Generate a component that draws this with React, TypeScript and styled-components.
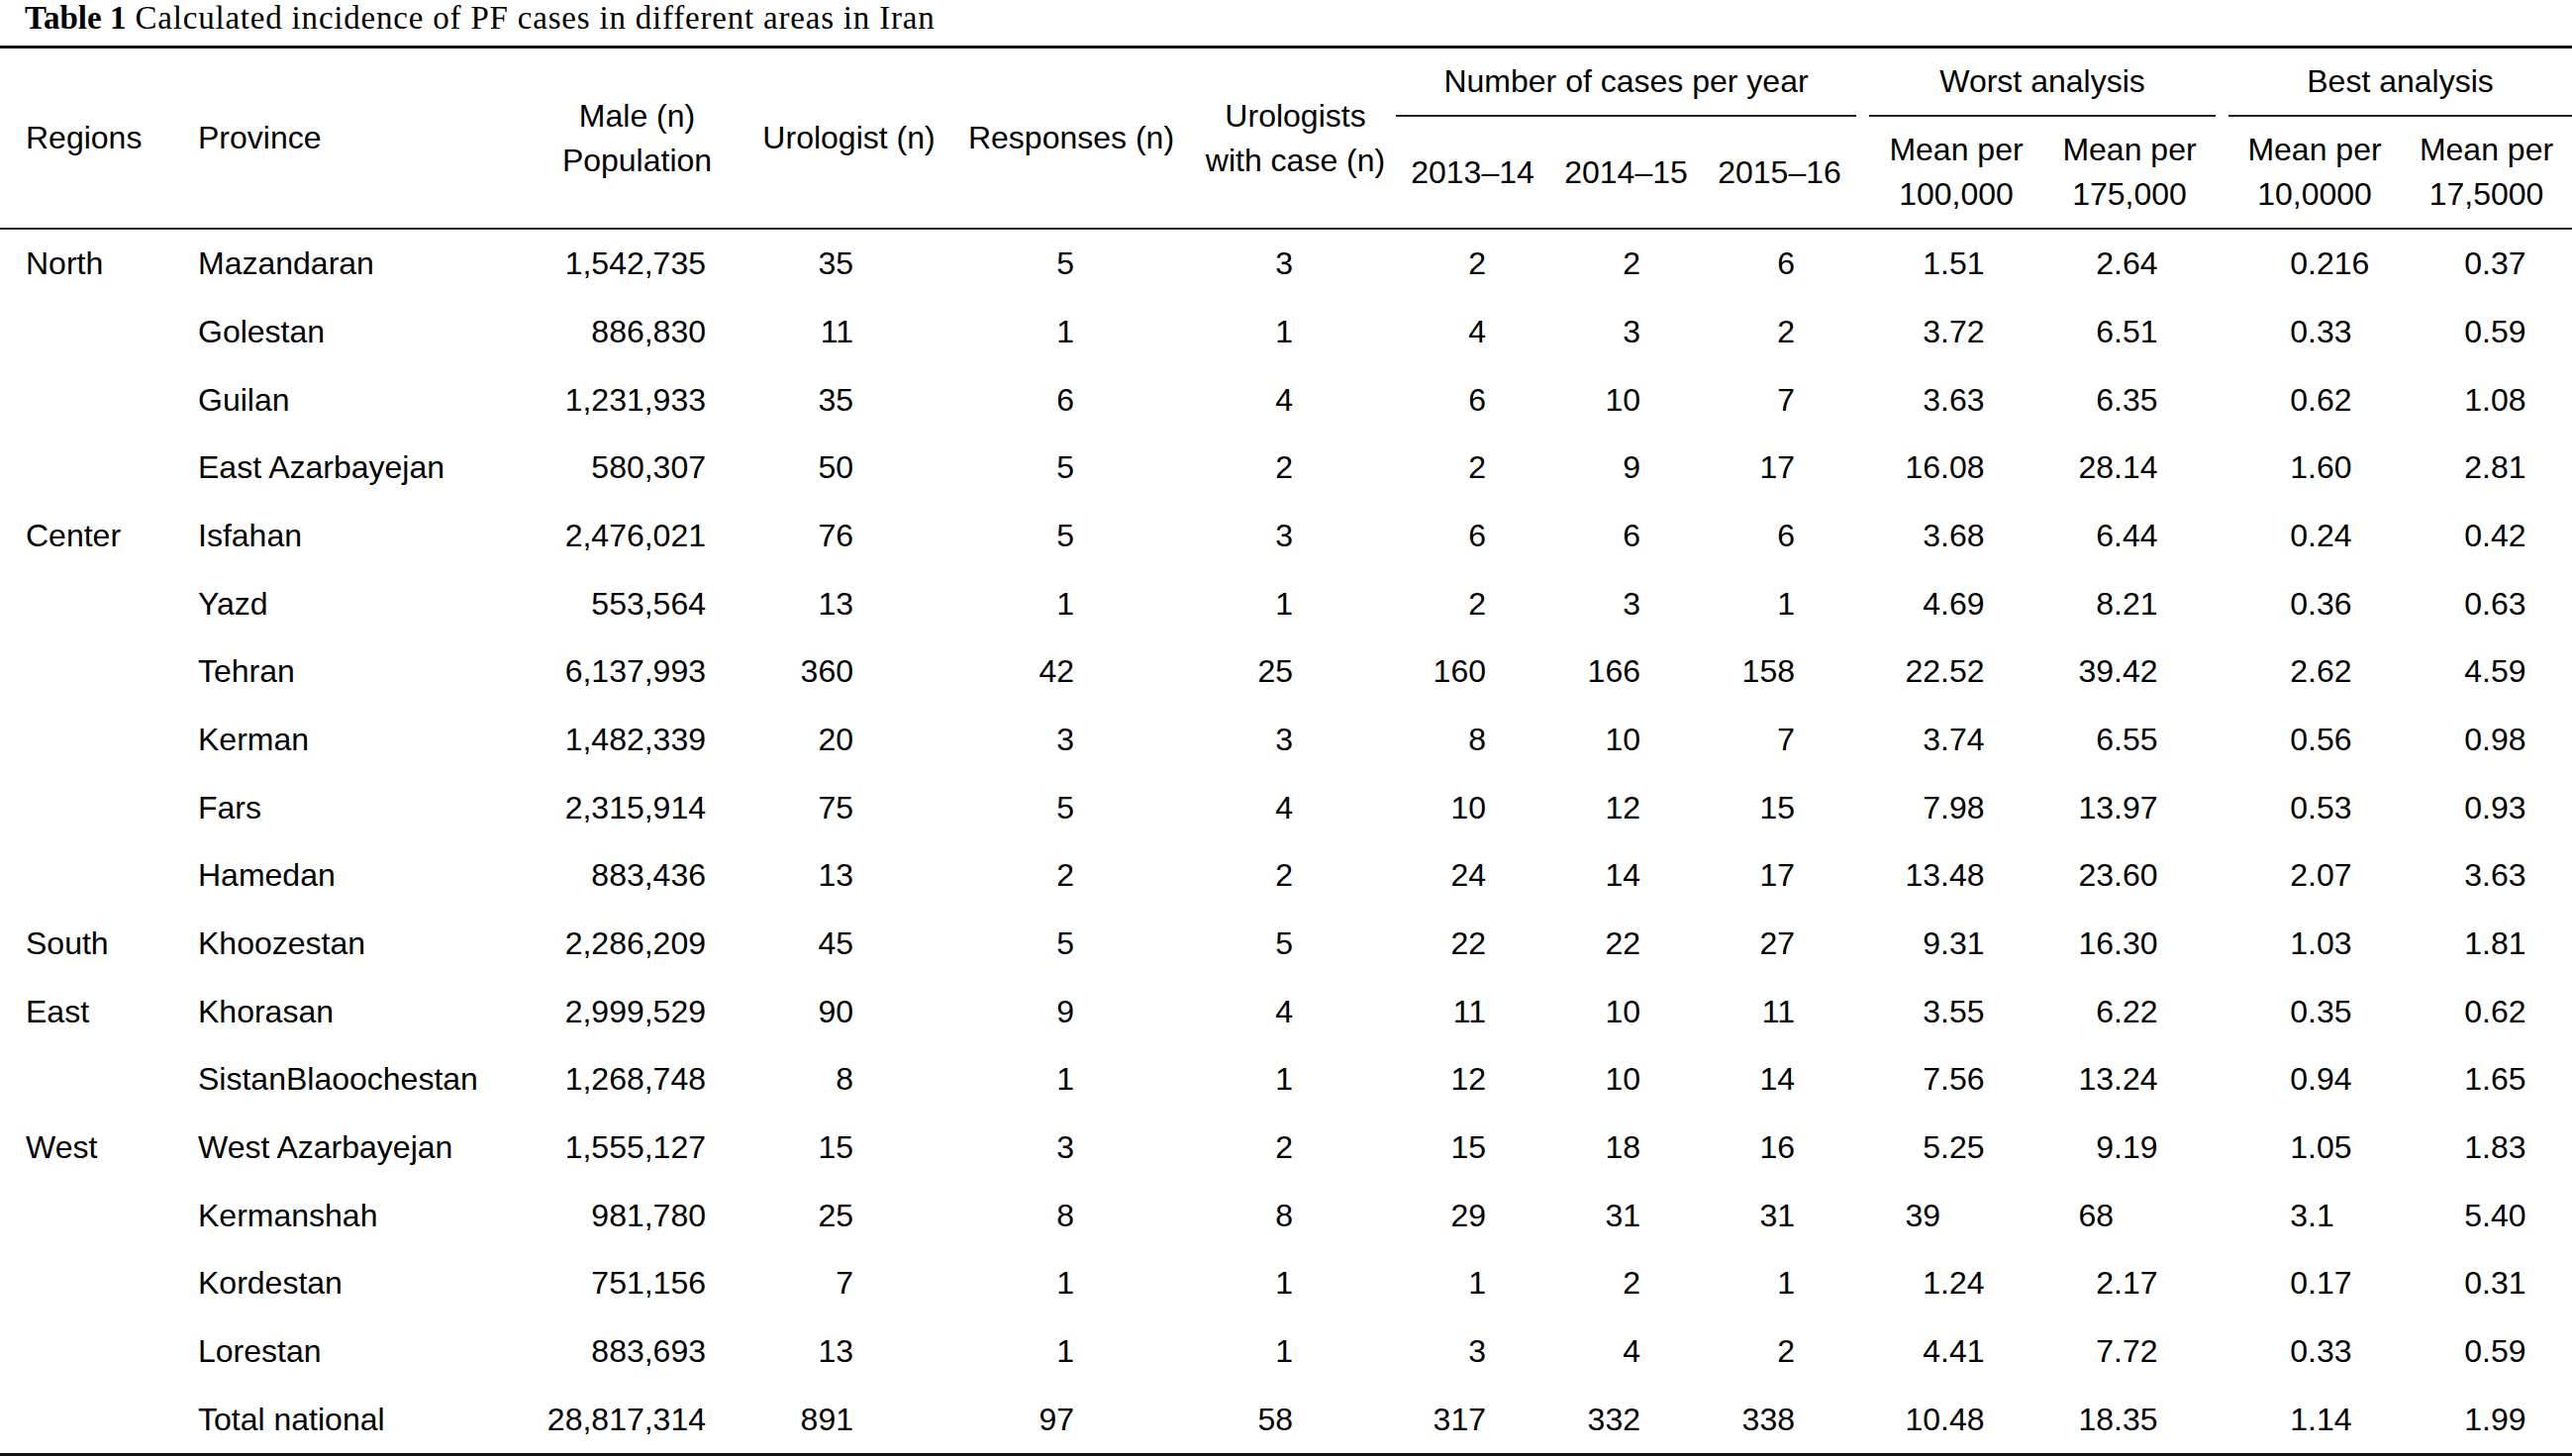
import React from "react";
import styled, { createGlobalStyle } from "styled-components";

const GlobalStyle = createGlobalStyle`
  html, body { margin: 0; padding: 0; background: #ffffff; }
  * { box-sizing: border-box; }
`;

const Page = styled.div`
  width: 2598px;
  background: #ffffff;
  color: #000000;
`;

const Caption = styled.div`
  height: 46px;
  padding-left: 25px;
  font-family: "Liberation Serif", "Times New Roman", serif;
  font-size: 33px;
  letter-spacing: 0.8px;
  line-height: 37px;
  color: #000;
  white-space: nowrap;
`;

const CaptionLabel = styled.b`
  font-weight: 700;
  letter-spacing: 0;
`;

const Table = styled.table`
  width: 2598px;
  table-layout: fixed;
  border-collapse: separate;
  border-spacing: 0;
  font-family: "Liberation Sans", Arial, Helvetica, sans-serif;
  font-size: 32px;
  color: #000;
`;

const HeadRow = styled.tr<{ $h: number }>`
  height: ${(p) => p.$h}px;
`;

const HeadCell = styled.th<{ $align?: "left" | "center"; $pl?: number; $top?: boolean; $bottom?: boolean; $pt?: number }>`
  font-weight: 400;
  padding: ${(p) => p.$pt ?? 0}px 0 0 ${(p) => p.$pl ?? 0}px;
  text-align: ${(p) => p.$align ?? "center"};
  vertical-align: middle;
  line-height: 45px;
  white-space: nowrap;
  border-top: ${(p) => (p.$top ? "3px solid #111" : "none")};
  border-bottom: ${(p) => (p.$bottom ? "2px solid #222" : "none")};
`;

const BodyRow = styled.tr<{ $last?: boolean }>`
  height: ${(p) => (p.$last ? 71.7 : 68.67)}px;
`;

const Cell = styled.td<{ $last?: boolean }>`
  padding: 0;
  vertical-align: middle;
  white-space: nowrap;
  line-height: 36px;
  border-bottom: ${(p) => (p.$last ? "3px solid #111" : "none")};
`;

const TextCell = styled(Cell)<{ $pl: number }>`
  text-align: left;
  padding-left: ${(p) => p.$pl}px;
`;

const NumCell = styled(Cell)<{ $pr: number }>`
  text-align: right;
  padding-right: ${(p) => p.$pr}px;
`;

const DecWrap = styled.div`
  display: flex;
  align-items: baseline;
`;

const IntPart = styled.span<{ $w: number }>`
  display: inline-block;
  width: ${(p) => p.$w}px;
  text-align: right;
`;

const FracPart = styled.span`
  text-align: left;
`;

const cols = [177, 352, 229, 199, 250, 203, 155, 155, 155, 13, 176, 174, 13, 174, 173];

type Row = [string, string, string, string, string, string, string, string, string, string, string, string, string];

const rows: Row[] = [
  ["North", "Mazandaran", "1,542,735", "35", "5", "3", "2", "2", "6", "1.51", "2.64", "0.216", "0.37"],
  ["", "Golestan", "886,830", "11", "1", "1", "4", "3", "2", "3.72", "6.51", "0.33", "0.59"],
  ["", "Guilan", "1,231,933", "35", "6", "4", "6", "10", "7", "3.63", "6.35", "0.62", "1.08"],
  ["", "East Azarbayejan", "580,307", "50", "5", "2", "2", "9", "17", "16.08", "28.14", "1.60", "2.81"],
  ["Center", "Isfahan", "2,476,021", "76", "5", "3", "6", "6", "6", "3.68", "6.44", "0.24", "0.42"],
  ["", "Yazd", "553,564", "13", "1", "1", "2", "3", "1", "4.69", "8.21", "0.36", "0.63"],
  ["", "Tehran", "6,137,993", "360", "42", "25", "160", "166", "158", "22.52", "39.42", "2.62", "4.59"],
  ["", "Kerman", "1,482,339", "20", "3", "3", "8", "10", "7", "3.74", "6.55", "0.56", "0.98"],
  ["", "Fars", "2,315,914", "75", "5", "4", "10", "12", "15", "7.98", "13.97", "0.53", "0.93"],
  ["", "Hamedan", "883,436", "13", "2", "2", "24", "14", "17", "13.48", "23.60", "2.07", "3.63"],
  ["South", "Khoozestan", "2,286,209", "45", "5", "5", "22", "22", "27", "9.31", "16.30", "1.03", "1.81"],
  ["East", "Khorasan", "2,999,529", "90", "9", "4", "11", "10", "11", "3.55", "6.22", "0.35", "0.62"],
  ["", "SistanBlaoochestan", "1,268,748", "8", "1", "1", "12", "10", "14", "7.56", "13.24", "0.94", "1.65"],
  ["West", "West Azarbayejan", "1,555,127", "15", "3", "2", "15", "18", "16", "5.25", "9.19", "1.05", "1.83"],
  ["", "Kermanshah", "981,780", "25", "8", "8", "29", "31", "31", "39", "68", "3.1", "5.40"],
  ["", "Kordestan", "751,156", "7", "1", "1", "1", "2", "1", "1.24", "2.17", "0.17", "0.31"],
  ["", "Lorestan", "883,693", "13", "1", "1", "3", "4", "2", "4.41", "7.72", "0.33", "0.59"],
  ["", "Total national", "28,817,314", "891", "97", "58", "317", "332", "338", "10.48", "18.35", "1.14", "1.99"],
];

const numPad = [45, 95, 122, 104, 64, 63, 62];
const decInt = [72, 71, 80, 82];

function Dec({ value, w, last }: { value: string; w: number; last: boolean }) {
  const i = value.indexOf(".");
  const intPart = i === -1 ? value : value.slice(0, i);
  const frac = i === -1 ? "" : value.slice(i);
  return (
    <Cell $last={last}>
      <DecWrap>
        <IntPart $w={w}>{intPart}</IntPart>
        <FracPart>{frac}</FracPart>
      </DecWrap>
    </Cell>
  );
}

export default function App() {
  return (
    <Page>
      <GlobalStyle />
      <Caption>
        <CaptionLabel>Table 1</CaptionLabel> Calculated incidence of PF cases in different areas in Iran
      </Caption>
      <Table>
        <colgroup>
          {cols.map((w, i) => (
            <col key={i} style={{ width: w }} />
          ))}
        </colgroup>
        <thead>
          <HeadRow $h={72}>
            <HeadCell rowSpan={2} $align="left" $pl={26} $top $bottom>Regions</HeadCell>
            <HeadCell rowSpan={2} $align="left" $pl={23} $top $bottom>Province</HeadCell>
            <HeadCell rowSpan={2} $top $bottom>Male (n)<br />Population</HeadCell>
            <HeadCell rowSpan={2} $top $bottom>Urologist (n)</HeadCell>
            <HeadCell rowSpan={2} $top $bottom>Responses (n)</HeadCell>
            <HeadCell rowSpan={2} $top $bottom>Urologists<br />with case (n)</HeadCell>
            <HeadCell colSpan={3} $top $bottom>Number of cases per year</HeadCell>
            <HeadCell rowSpan={2} $top $bottom />
            <HeadCell colSpan={2} $top $bottom>Worst analysis</HeadCell>
            <HeadCell rowSpan={2} $top $bottom />
            <HeadCell colSpan={2} $top $bottom>Best analysis</HeadCell>
          </HeadRow>
          <HeadRow $h={114}>
            <HeadCell $bottom>2013–14</HeadCell>
            <HeadCell $bottom>2014–15</HeadCell>
            <HeadCell $bottom>2015–16</HeadCell>
            <HeadCell $bottom>Mean per<br />100,000</HeadCell>
            <HeadCell $bottom>Mean per<br />175,000</HeadCell>
            <HeadCell $bottom>Mean per<br />10,0000</HeadCell>
            <HeadCell $bottom>Mean per<br />17,5000</HeadCell>
          </HeadRow>
        </thead>
        <tbody>
          {rows.map((r, ri) => {
            const last = ri === rows.length - 1;
            return (
              <BodyRow key={ri} $last={last}>
                <TextCell $pl={26} $last={last}>{r[0]}</TextCell>
                <TextCell $pl={23} $last={last}>{r[1]}</TextCell>
                {r.slice(2, 9).map((v, ci) => (
                  <NumCell key={ci} $pr={numPad[ci]} $last={last}>{v}</NumCell>
                ))}
                <Cell $last={last} />
                <Dec value={r[9]} w={decInt[0]} last={last} />
                <Dec value={r[10]} w={decInt[1]} last={last} />
                <Cell $last={last} />
                <Dec value={r[11]} w={decInt[2]} last={last} />
                <Dec value={r[12]} w={decInt[3]} last={last} />
              </BodyRow>
            );
          })}
        </tbody>
      </Table>
    </Page>
  );
}
